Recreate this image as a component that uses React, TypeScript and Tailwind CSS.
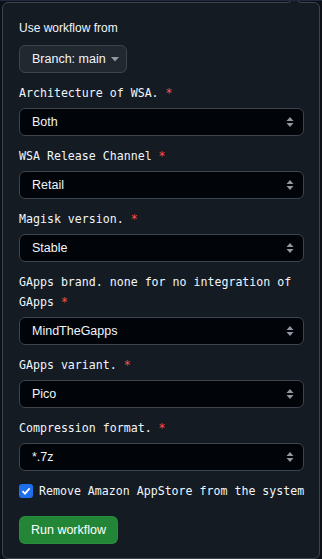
import React from 'react'

const sans = { fontFamily: '"Liberation Sans", Arial, sans-serif' }
const mono = { fontFamily: '"DejaVu Sans Mono", "Liberation Mono", monospace' }

interface Field {
    label: string,
    value: string
}

const fields: Field[] = [
    { label: 'Architecture of WSA.', value: 'Both' },
    { label: 'WSA Release Channel', value: 'Retail' },
    { label: 'Magisk version.', value: 'Stable' },
    { label: 'GApps brand. none for no integration of GApps', value: 'MindTheGapps' },
    { label: 'GApps variant.', value: 'Pico' },
    { label: 'Compression format.', value: '*.7z' },
]

function UpDown() {
    return (
        <svg width="8" height="12" viewBox="0 0 8 12" className="text-[#9198a1]" aria-hidden="true">
            <path d="M4 1 L7.5 5 H0.5 Z" fill="currentColor" />
            <path d="M4 11 L7.5 7 H0.5 Z" fill="currentColor" />
        </svg>
    )
}

function SelectBox({ value }: { value: string }) {
    return (
        <div className="flex h-7 w-full items-center justify-between rounded-md border border-[#3d444d] bg-[#010409] pl-[12px] pr-[9px]">
            <span className="text-[12.5px] text-[#f0f6fc]" style={sans}>{value}</span>
            <UpDown />
        </div>
    )
}

function App() {
    return (
        <div className="h-[559px] w-[322px] overflow-hidden border-t border-[#1e2a3b] bg-[#0d1117]">
            <div className="relative ml-[2px] mt-px h-[557px] w-[318px] rounded-md border border-[#3d444d] bg-[#151b23] pl-4 pr-[15px] pt-[15px]">
                <div className="absolute -top-[5px] left-[287px] h-[9px] w-[9px] rotate-45 border-l border-t border-[#3d444d] bg-[#151b23]"></div>
                <div className="text-[12px] leading-5 text-[#f0f6fc]" style={sans}>Use workflow from</div>
                <button type="button" className="mt-[7px] flex h-7 w-[108px] items-center gap-[5px] rounded-md border border-[#3d444d] bg-[#212830] pl-[12px] text-[12.5px] text-[#f0f6fc]" style={sans}>
                    <span>Branch: main</span>
                    <svg width="8" height="5" viewBox="0 0 8 5" aria-hidden="true">
                        <path d="M0 0 H8 L4 4.5 Z" fill="#9198a1" />
                    </svg>
                </button>
                <div className="mt-[10px] flex flex-col gap-[10px]">
                    {fields.map((f) => (
                        <div key={f.label}>
                            <div className="mb-[5px] text-[11.6px] leading-5 text-[#f0f6fc]" style={mono}>
                                {f.label} <span className="text-[#f85149]">*</span>
                            </div>
                            <SelectBox value={f.value} />
                        </div>
                    ))}
                </div>
                <label className="mt-[10px] flex items-center gap-[6px]">
                    <span className="flex h-[14px] w-[14px] shrink-0 items-center justify-center rounded-[3px] bg-[#1f6feb]">
                        <svg width="10" height="10" viewBox="0 0 10 10" aria-hidden="true">
                            <path d="M1.5 5.2 L4 7.6 L8.6 2.4" fill="none" stroke="#ffffff" strokeWidth="1.8" />
                        </svg>
                    </span>
                    <span className="whitespace-nowrap text-[11.6px] leading-5 text-[#f0f6fc]" style={mono}>Remove Amazon AppStore from the system</span>
                </label>
                <button type="button" className="mt-[15px] flex h-7 w-[99px] items-center justify-center rounded-md border border-[#2f9a48]/40 bg-[#238636] text-[12.5px] text-white" style={sans}>
                    Run workflow
                </button>
            </div>
        </div>
    )
}

export default App
